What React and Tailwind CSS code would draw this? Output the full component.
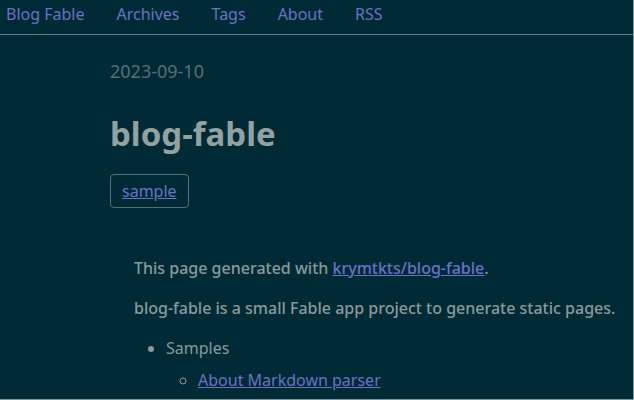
const links = ["Blog Fable", "Archives", "Tags", "About", "RSS"];

export default function App() {
  return (
    <div className="min-h-screen border-r border-b border-[#7d9696] bg-[#002b36] font-['Noto_Sans','Open_Sans',sans-serif] text-base leading-6 font-medium text-[#8a9a9a]">
      <header className="border-b border-[#657b83]">
        <nav className="flex gap-8 px-1.5 pt-0.5 pb-2">
          {links.map((name) => (
            <a key={name} href="#" className="font-normal text-[#6c71c4]">{name}</a>
          ))}
        </nav>
      </header>
      <main className="pt-6 pl-[110px]">
        <time className="block text-lg leading-6 font-normal text-[#586e75]" dateTime="2023-09-10">2023-09-10</time>
        <h1 className="mt-[31px] text-[33px] leading-10 font-bold text-[#93a1a1]">blog-fable</h1>
        <ul className="mt-5 flex">
          <li className="rounded border border-[#586e75] px-[11px] py-1">
            <a href="#" className="font-normal text-[#6c71c4] underline">sample</a>
          </li>
        </ul>
        <article className="mt-12 pl-6">
          <p>This page generated with <a href="#" className="text-[#6c71c4] underline">krymtkts/blog-fable</a>.</p>
          <p className="mt-4">blog-fable is a small Fable app project to generate static pages.</p>
          <ul className="mt-4 list-disc pl-8">
            <li>
              <span className="font-normal">Samples</span>
              <ul className="mt-2 list-[circle] pl-8">
                <li><a href="#" className="font-normal text-[#6c71c4] underline">About Markdown parser</a></li>
              </ul>
            </li>
          </ul>
        </article>
      </main>
    </div>
  );
}
